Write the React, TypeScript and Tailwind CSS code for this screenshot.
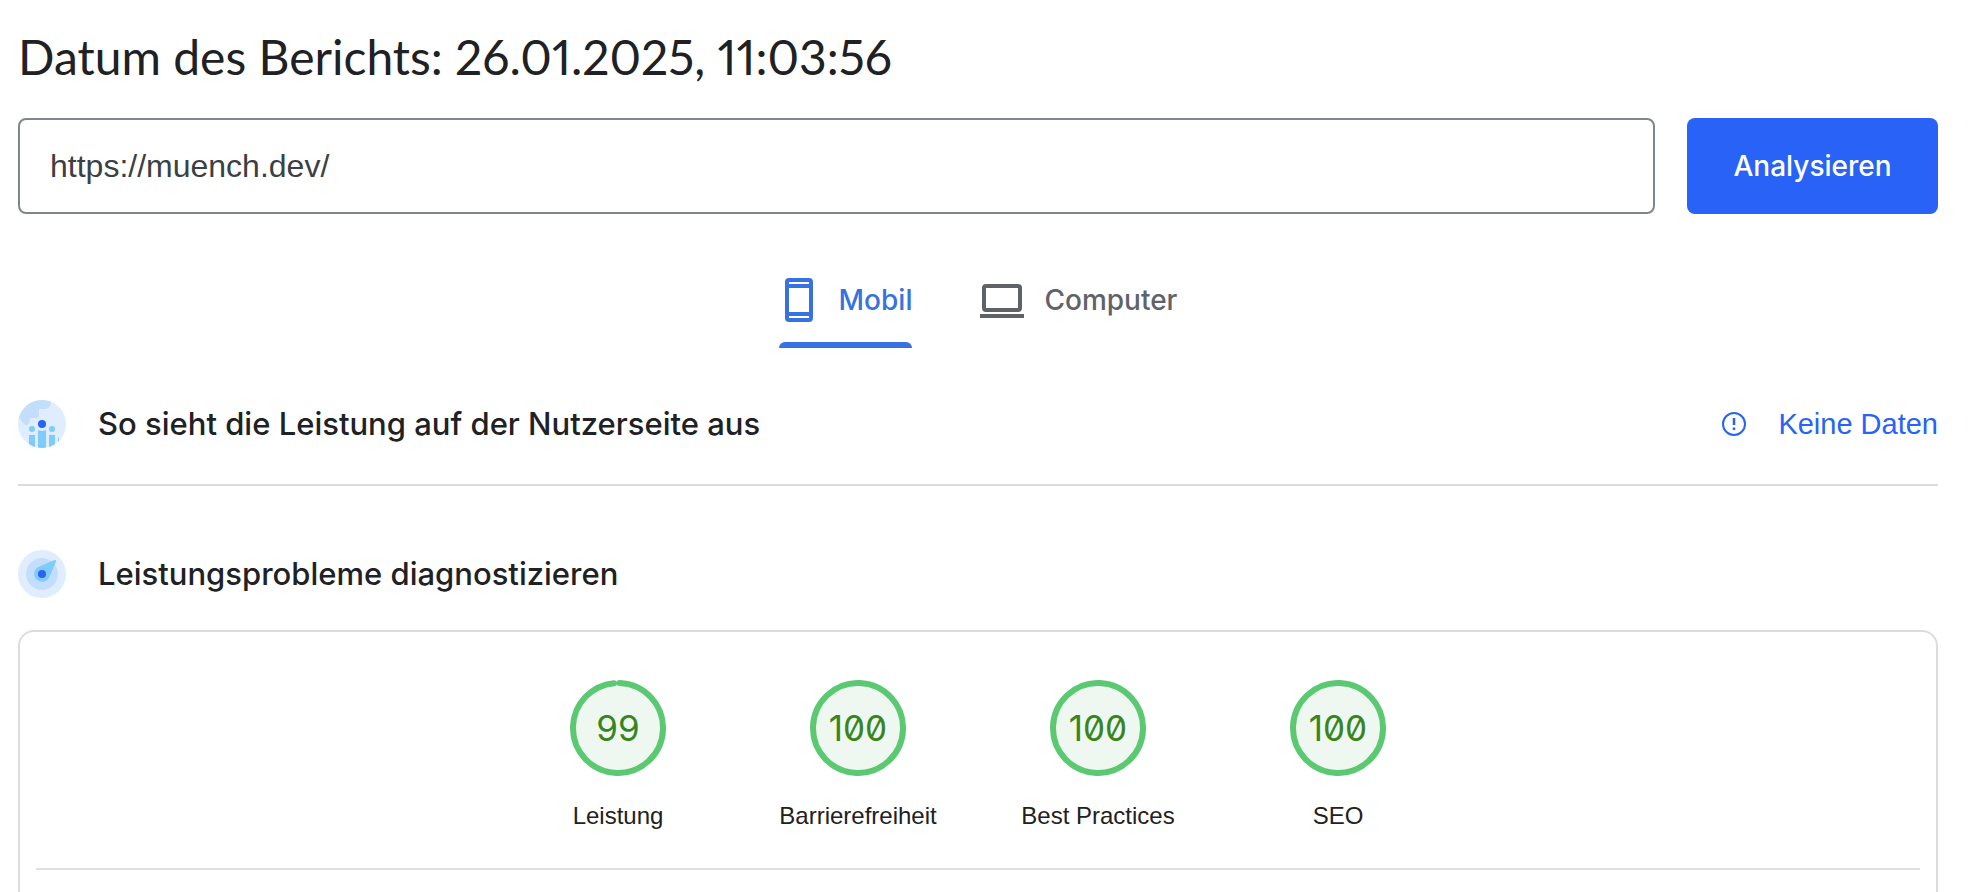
import { useState } from "react";

interface GaugeData {
  label: string;
  score: number;
}

const gauges: GaugeData[] = [
  { label: "Leistung", score: 99 },
  { label: "Barrierefreiheit", score: 100 },
  { label: "Best Practices", score: 100 },
  { label: "SEO", score: 100 },
];

function PhoneIcon() {
  return (
    <svg viewBox="4 0 40 48" className="h-12 w-10" fill="currentColor" aria-hidden="true">
      <path
        fillRule="evenodd"
        d="M14 2h20a4 4 0 0 1 4 4v36a4 4 0 0 1-4 4H14a4 4 0 0 1-4-4V6a4 4 0 0 1 4-4zM14 6v2h20V6zM14 12v24h20V12zM14 40v2h20v-2z"
      />
    </svg>
  );
}

function LaptopIcon() {
  return (
    <svg viewBox="2 0 44 48" className="h-12 w-11" fill="currentColor" aria-hidden="true">
      <path
        fillRule="evenodd"
        d="M8 8h32a4 4 0 0 1 4 4v20a4 4 0 0 1-4 4H8a4 4 0 0 1-4-4V12a4 4 0 0 1 4-4zM8 12v20h32V12z"
      />
      <path d="M2 38h44v4H2z" />
    </svg>
  );
}

function UsersIcon() {
  return (
    <svg viewBox="0 0 48 48" className="h-12 w-12 shrink-0" aria-hidden="true">
      <clipPath id="users-clip">
        <circle cx="24" cy="24" r="24" />
      </clipPath>
      <g clipPath="url(#users-clip)">
        <path fill="#e0edfe" d="M0 0h48v48H0z" />
        <path fill="#c3defc" d="M0 0h33v3q-1 6-7 6h-5v6q0 3-3 3h-6v4l-4 4-8-9z" />
        <path fill="#7fcbfb" d="M11 35h6v13h-6zM20 30q4 2 8 0v18h-8zM31 35h6v13h-6zM40 39l1-2v8h-1z" />
        <circle cx="14" cy="29" r="3" fill="#7fcbfb" />
        <circle cx="34" cy="29" r="3" fill="#7fcbfb" />
        <circle cx="24" cy="24" r="4" fill="#2962f6" />
      </g>
    </svg>
  );
}

function DiagnoseIcon() {
  return (
    <svg viewBox="0 0 48 48" className="h-12 w-12 shrink-0" aria-hidden="true">
      <circle cx="24" cy="24" r="24" fill="#e0edfe" />
      <circle cx="24" cy="24" r="16" fill="#c3defc" />
      <path
        fill="#7fcbfb"
        d="M20 17 36.500 10q2-.5 1.500 1.500L31 28a8 8 0 1 1-11-11z"
      />
      <circle cx="24" cy="24" r="4" fill="#2962f6" />
    </svg>
  );
}

function InfoIcon() {
  return (
    <svg viewBox="0 0 24 24" className="h-6 w-6" fill="none" stroke="currentColor" strokeWidth="2" aria-hidden="true">
      <circle cx="12" cy="12" r="11" />
      <path d="M12 6v7M12 15.500v2.500" strokeWidth="2.500" />
    </svg>
  );
}

function Gauge({ label, score }: GaugeData) {
  return (
    <li className="flex w-60 flex-col items-center">
      <div className="relative h-24 w-24">
        <svg viewBox="0 0 96 96" className="h-24 w-24" aria-hidden="true">
          <circle cx="48" cy="48" r="45" fill="#eef8f1" />
          <circle
            cx="48"
            cy="48"
            r="45"
            fill="none"
            stroke="#5bc971"
            strokeWidth="6"
            strokeLinecap={score < 100 ? "round" : "butt"}
            pathLength="200"
            strokeDasharray={score < 100 ? "196 4" : "200 0"}
            transform="rotate(-88 48 48)"
          />
        </svg>
        <span className="absolute inset-0 flex items-center justify-center font-['Inter',sans-serif] text-[35px] leading-none text-[#388520] slashed-zero">
          {score}
        </span>
      </div>
      <span className="mt-6 text-2xl leading-8 text-[#212121]">{label}</span>
    </li>
  );
}

export default function App() {
  const [url, setUrl] = useState("https://muench.dev/");
  const [tab, setTab] = useState("mobile");

  const tabClass = (name: string) =>
    `flex flex-col ${tab === name ? "text-[#3871e0]" : "text-[#5f6368]"}`;

  return (
    <main className="flex min-h-screen flex-col bg-white pr-[34px] pl-[18px] font-['Liberation_Sans',Arial,sans-serif] text-[#202124]">
      <h1 className="pt-7 font-['Lato',sans-serif] text-5xl leading-[58px] proportional-nums">
        Datum des Berichts: 26.01.2025, 11:03:56
      </h1>

      <form className="mt-8 flex gap-8" onSubmit={(e) => e.preventDefault()}>
        <input
          type="url"
          aria-label="URL der Webseite"
          value={url}
          onChange={(e) => setUrl(e.target.value)}
          className="h-24 min-w-0 flex-1 rounded-lg border-2 border-[#80868b] px-[30px] text-[32px] text-[#3c4043] outline-none"
        />
        <button
          type="submit"
          className="h-24 w-[251px] rounded-lg bg-[#2962f6] font-['Inter',sans-serif] text-[28px] font-medium text-white"
        >
          Analysieren
        </button>
      </form>

      <div role="tablist" className="mt-[62px] flex justify-center gap-[68px]">
        <button
          type="button"
          role="tab"
          aria-selected={tab === "mobile"}
          onClick={() => setTab("mobile")}
          className={tabClass("mobile")}
        >
          <span className="flex items-center gap-5">
            <PhoneIcon />
            <span className="font-['Inter',sans-serif] text-[28px] font-medium">Mobil</span>
          </span>
          {tab === "mobile" && <span className="mt-[18px] h-[6px] w-full rounded-t-md bg-[#3871e0]" />}
        </button>
        <button
          type="button"
          role="tab"
          aria-selected={tab === "desktop"}
          onClick={() => setTab("desktop")}
          className={tabClass("desktop")}
        >
          <span className="flex items-center gap-5">
            <LaptopIcon />
            <span className="font-['Inter',sans-serif] text-[28px] font-medium">Computer</span>
          </span>
          {tab === "desktop" && <span className="mt-[18px] h-[6px] w-full rounded-t-md bg-[#3871e0]" />}
        </button>
      </div>

      <section className="mt-[52px] flex items-center gap-8 border-b-2 border-[#dadce0] pb-9">
        <UsersIcon />
        <h2 className="flex-1 font-['Inter',sans-serif] text-[31px] leading-[48px] font-medium">
          So sieht die Leistung auf der Nutzerseite aus
        </h2>
        <a href="#daten" className="flex items-center gap-8 text-[29px] leading-[48px] text-[#2962f6]">
          <InfoIcon />
          Keine Daten
        </a>
      </section>

      <section className="mt-16 flex flex-1 flex-col">
        <div className="flex items-center gap-8">
          <DiagnoseIcon />
          <h2 className="font-['Inter',sans-serif] text-[31px] leading-[48px] font-medium">
            Leistungsprobleme diagnostizieren
          </h2>
        </div>
        <div className="mt-8 flex-1 rounded-t-2xl border-2 border-b-0 border-[#dadce0] px-4 pt-12">
          <ul className="flex justify-center border-b-2 border-[#e0e0e0] pb-9">
            {gauges.map((g) => (
              <Gauge key={g.label} {...g} />
            ))}
          </ul>
        </div>
      </section>
    </main>
  );
}
